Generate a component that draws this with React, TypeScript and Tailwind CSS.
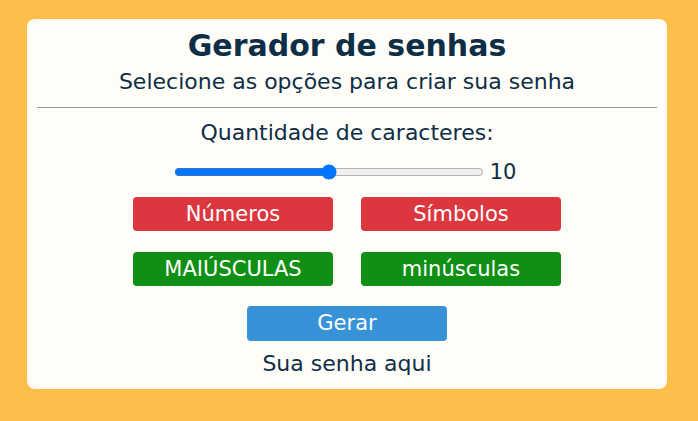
import React, { useState } from "react";

export default function App() {
  const [len, setLen] = useState(10);
  return (
    <div
      className="w-[698px] h-[421px] bg-[#fdbe4b] pt-[19px] pl-[27px]"
      style={{ fontFamily: '"DejaVu Sans", "Noto Sans", sans-serif' }}
    >
      <div className="w-[640px] h-[370px] bg-[#fffdf8] rounded-[8px] px-[10px] flex flex-col items-center text-[#0d2e47]">
        <h1 className="text-[30px] font-bold leading-[36px] mt-[9px]">Gerador de senhas</h1>
        <p className="text-[22px] leading-[26px] mt-[5px]">Selecione as opções para criar sua senha</p>
        <div className="w-full h-px bg-[#9a9a9a] mt-[12px]" />
        <p className="text-[22px] leading-[26px] mt-[12px]">Quantidade de caracteres:</p>
        <div className="flex items-center h-[24px] mt-[14px] -ml-[4px]">
          <input
            type="range"
            min={0}
            max={20}
            value={len}
            onChange={(e) => setLen(Number(e.target.value))}
            className="w-[310px] m-0"
          />
          <span className="text-[21px] leading-[24px] ml-[6px]">{len}</span>
        </div>
        <div className="grid grid-cols-[200px_200px] gap-x-[28px] gap-y-[21px] mt-[13px]">
          <button className="h-[34px] rounded-[4px] bg-[#dc363f] text-white text-[21px] leading-[34px]">Números</button>
          <button className="h-[34px] rounded-[4px] bg-[#dc363f] text-white text-[21px] leading-[34px]">Símbolos</button>
          <button className="h-[34px] rounded-[4px] bg-[#0f8f13] text-white text-[21px] leading-[34px]">MAIÚSCULAS</button>
          <button className="h-[34px] rounded-[4px] bg-[#0f8f13] text-white text-[21px] leading-[34px]">minúsculas</button>
        </div>
        <button className="w-[200px] h-[35px] rounded-[4px] bg-[#3892d7] text-white text-[21px] leading-[35px] mt-[20px]">Gerar</button>
        <p className="text-[22px] leading-[26px] mt-[10px]">Sua senha aqui</p>
      </div>
    </div>
  );
}
